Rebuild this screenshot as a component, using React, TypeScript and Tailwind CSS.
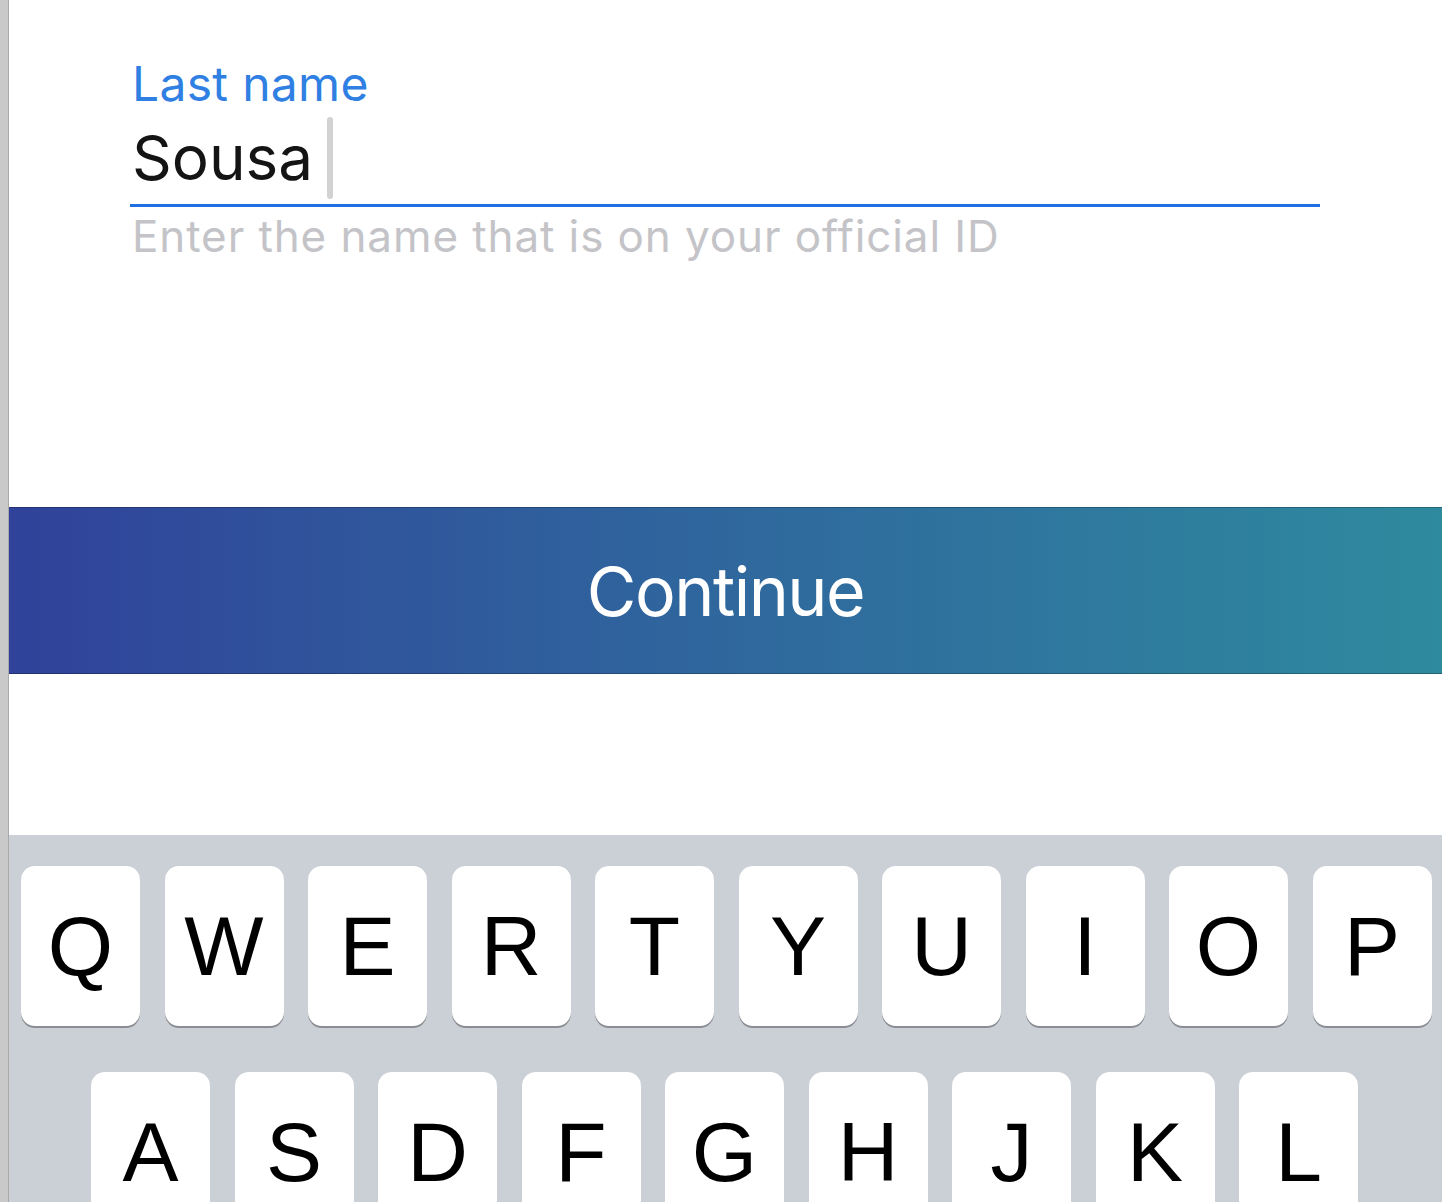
import React from "react";

const row1 = ["Q", "W", "E", "R", "T", "Y", "U", "I", "O", "P"];
const row2 = ["A", "S", "D", "F", "G", "H", "J", "K", "L"];

function Key({ k }: { k: string }) {
  return (
    <div className="w-[119px] h-[160px] shrink-0 rounded-[14px] bg-white shadow-[0_2px_0_0_#8a8d92] flex items-center justify-center">
      <span className="text-[84px] leading-none text-black font-['Liberation_Sans',Arial,sans-serif]">{k}</span>
    </div>
  );
}

export default function App() {
  return (
    <div className="flex w-[1442px] h-[1202px] overflow-hidden bg-white">
      <div className="w-[9px] shrink-0 bg-[#c9c9c9] border-r border-[#a9a9a9]" />
      <div className="flex-1 flex flex-col min-w-0">
        <div className="h-[507px] shrink-0 bg-white pl-[121px] pt-[60px] font-['Inter','Noto_Sans',sans-serif]">
          <div className="w-[1190px]">
            <div className="text-[48px] leading-none tracking-[0.3px] text-[#2f80e2] pl-[2px]">Last name</div>
            <div className="flex items-center h-[84px] mt-[8px] pl-[2px]">
              <span className="text-[62px] leading-none text-[#141414]">Sousa</span>
              <span className="ml-[14px] w-[6px] h-[82px] rounded-full bg-[#d2d2d2]" />
            </div>
            <div className="h-[3px] bg-[#1e6fe0] mt-[4px]" />
            <div className="text-[44px] leading-none tracking-[0.9px] text-[#c4c4c8] mt-[7px] pl-[2px]">Enter the name that is on your official ID</div>
          </div>
        </div>
        <button className="h-[167px] shrink-0 w-full bg-gradient-to-r from-[#30429a] to-[#2e8a9e] border-y border-black/25 flex items-center justify-center">
          <span className="text-[68px] leading-none tracking-[-1.5px] text-white font-['Inter','Noto_Sans',sans-serif]">Continue</span>
        </button>
        <div className="h-[161px] shrink-0 bg-white" />
        <div className="flex-1 bg-[#cbd0d7] pt-[31px] flex flex-col gap-[46px]">
          <div className="flex gap-[24.5px] pl-[12px]">
            {row1.map((k) => (
              <Key key={k} k={k} />
            ))}
          </div>
          <div className="flex gap-[24.5px] pl-[82px]">
            {row2.map((k) => (
              <Key key={k} k={k} />
            ))}
          </div>
        </div>
      </div>
    </div>
  );
}
